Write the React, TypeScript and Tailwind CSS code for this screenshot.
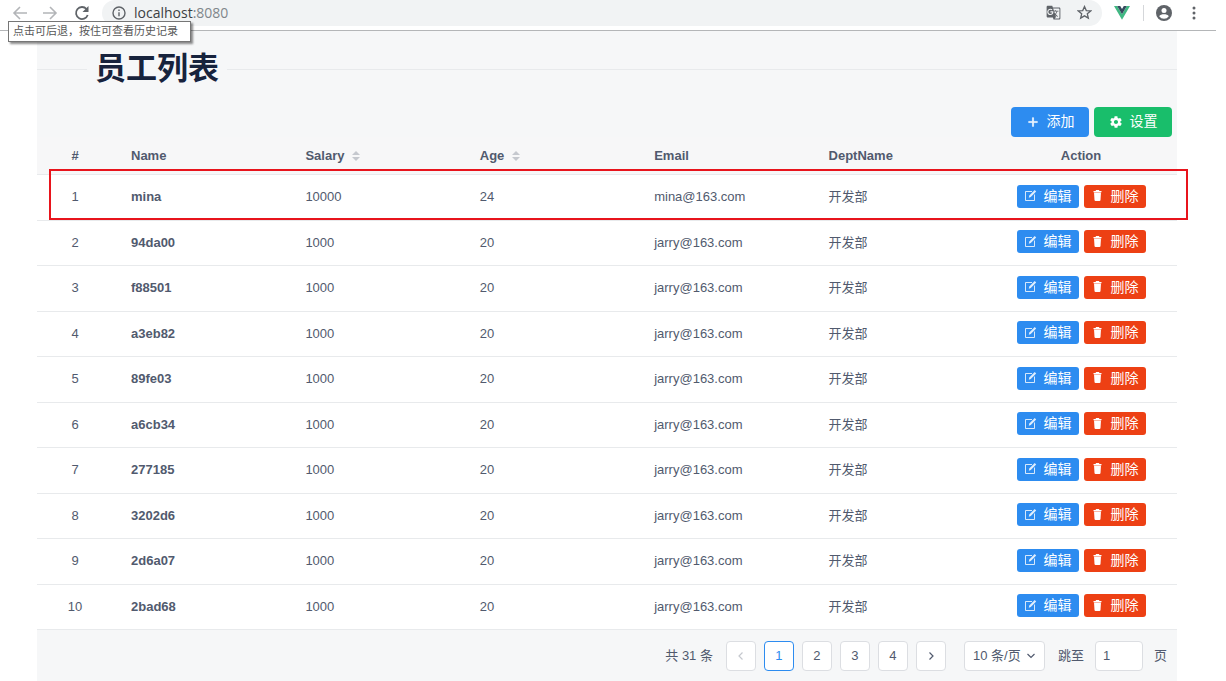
import type { ReactNode } from "react";
import { IoMdAdd, IoMdSettings } from "react-icons/io";
import { MdGTranslate } from "react-icons/md";

type Employee = {
  id: number;
  name: string;
  salary: number;
  age: number;
  email: string;
  dept: string;
};

const employees: Employee[] = [
  { id: 1, name: "mina", salary: 10000, age: 24, email: "mina@163.com", dept: "开发部" },
  { id: 2, name: "94da00", salary: 1000, age: 20, email: "jarry@163.com", dept: "开发部" },
  { id: 3, name: "f88501", salary: 1000, age: 20, email: "jarry@163.com", dept: "开发部" },
  { id: 4, name: "a3eb82", salary: 1000, age: 20, email: "jarry@163.com", dept: "开发部" },
  { id: 5, name: "89fe03", salary: 1000, age: 20, email: "jarry@163.com", dept: "开发部" },
  { id: 6, name: "a6cb34", salary: 1000, age: 20, email: "jarry@163.com", dept: "开发部" },
  { id: 7, name: "277185", salary: 1000, age: 20, email: "jarry@163.com", dept: "开发部" },
  { id: 8, name: "3202d6", salary: 1000, age: 20, email: "jarry@163.com", dept: "开发部" },
  { id: 9, name: "2d6a07", salary: 1000, age: 20, email: "jarry@163.com", dept: "开发部" },
  { id: 10, name: "2bad68", salary: 1000, age: 20, email: "jarry@163.com", dept: "开发部" },
];

export default function App() {
  return (
    <div className="min-h-screen bg-white pr-[10px] font-['Liberation_Sans','Noto_Sans_CJK_SC',sans-serif] text-[13px] text-[#515a6e]">
      <BrowserBar />
      <main className="pr-[39px] pl-[37px]">
        <div className="bg-[#f6f7f8] pt-4">
          <Title>员工列表</Title>
          <div className="mt-4 flex justify-end gap-[5px] pr-[5px]">
            <ToolbarButton
              className="bg-[#2d8cf0]"
              icon={<IoMdAdd className="size-[14px] stroke-current stroke-[20px]" />}
            >
              添加
            </ToolbarButton>
            <ToolbarButton className="bg-[#19be6b]" icon={<IoMdSettings className="size-[14px]" />}>
              设置
            </ToolbarButton>
          </div>
          <EmployeeTable />
          <Pager />
        </div>
      </main>
    </div>
  );
}

function BrowserBar() {
  return (
    <header className="relative flex h-[31px] items-center border-b border-[#b4b6b8] bg-white pb-[5px] text-[#5f6368]">
      <button type="button" aria-label="后退" className="ml-3 text-[#b3b5b8]">
        <ArrowIcon />
      </button>
      <button type="button" aria-label="前进" className="ml-[14px] rotate-180 text-[#b3b5b8]">
        <ArrowIcon />
      </button>
      <button type="button" aria-label="刷新" className="ml-4">
        <ReloadIcon />
      </button>
      <div className="ml-3 flex h-[26px] flex-1 items-center rounded-full bg-[#f1f3f4] px-[10px]">
        <InfoIcon />
        <span className="ml-2 flex-1 font-['Open_Sans',sans-serif] text-[14px] leading-5 text-[#80868b]">
          <span className="text-[#3c4043]">localhost</span>:8080
        </span>
        <button type="button" aria-label="翻译">
          <MdGTranslate className="size-[15px]" />
        </button>
        <button type="button" aria-label="收藏" className="ml-4">
          <StarIcon />
        </button>
      </div>
      <button type="button" aria-label="Vue" className="ml-3">
        <VueIcon />
      </button>
      <span className="ml-[13px] h-4 w-px bg-[#d5d7da]" />
      <button type="button" aria-label="用户" className="ml-3">
        <AccountIcon />
      </button>
      <button type="button" aria-label="更多" className="mr-5 ml-5">
        <MoreIcon />
      </button>
      <div
        role="tooltip"
        className="absolute top-[21px] left-2 z-10 h-[21px] border border-[#767676] bg-white pr-[12px] pl-1 text-[11px] leading-[19px] text-[#575757] shadow-[2px_2px_2px_rgba(0,0,0,0.45)]"
      >
        点击可后退，按住可查看历史记录
      </div>
    </header>
  );
}

/** Section heading with a hairline on either side. */
function Title({ children }: { children: ReactNode }) {
  return (
    <div className="flex items-center">
      <span className="h-px w-[50px] bg-[#e8eaec]" />
      <h1 className="px-2 text-[31px] leading-[44px] font-bold text-[#17233d]">{children}</h1>
      <span className="h-px flex-1 bg-[#e8eaec]" />
    </div>
  );
}

function ToolbarButton({
  className,
  icon,
  children,
}: {
  className: string;
  icon: ReactNode;
  children: ReactNode;
}) {
  return (
    <button
      type="button"
      className={`flex h-[30px] w-[78px] items-center justify-center gap-[7px] rounded pb-px text-[14px] text-white ${className}`}
    >
      {icon}
      {children}
    </button>
  );
}

function EmployeeTable() {
  return (
    <div className="relative">
      <table className="w-full table-fixed border-collapse text-left">
        <thead>
          <tr className="h-[37px] border-b border-[#e8eaec] bg-[#f7f7f8]">
            <th className="w-[76px] text-center">#</th>
            <th className="px-[18px]">Name</th>
            <th className="px-[18px]">
              Salary <SortIcon />
            </th>
            <th className="px-[18px]">
              Age <SortIcon />
            </th>
            <th className="px-[18px]">Email</th>
            <th className="px-[18px]">DeptName</th>
            <th className="w-[192px] text-center">Action</th>
          </tr>
        </thead>
        <tbody>
          {employees.map((e) => (
            <tr
              key={e.id}
              className="border-b border-[#e8eaec] bg-white odd:h-[46px] even:h-[45px]"
            >
              <td className="text-center">{e.id}</td>
              <td className="px-[18px] font-bold">{e.name}</td>
              <td className="px-[18px]">{e.salary}</td>
              <td className="px-[18px]">{e.age}</td>
              <td className="px-[18px]">{e.email}</td>
              <td className="px-[18px]">{e.dept}</td>
              <td className="pb-[2px]">
                <div className="flex justify-center gap-[5px]">
                  <RowButton className="bg-[#2d8cf0]" icon={<EditIcon />}>
                    编辑
                  </RowButton>
                  <RowButton className="bg-[#ed4014]" icon={<TrashIcon />}>
                    删除
                  </RowButton>
                </div>
              </td>
            </tr>
          ))}
        </tbody>
      </table>
      {/* marks the first record */}
      <div className="pointer-events-none absolute top-8 -right-[11px] left-3 h-[51px] border-2 border-[#e8141c]" />
    </div>
  );
}

function RowButton({
  className,
  icon,
  children,
}: {
  className: string;
  icon: ReactNode;
  children: ReactNode;
}) {
  return (
    <button
      type="button"
      className={`flex h-[23px] w-[62px] items-center justify-center gap-[7px] rounded-[3px] pb-px text-[14px] leading-none text-white ${className}`}
    >
      {icon}
      {children}
    </button>
  );
}

const pagerBox = "flex h-[30px] items-center justify-center rounded border bg-white";

function Pager() {
  return (
    <nav className="flex h-[51px] items-center justify-end pt-px pr-[10px]">
      <span className="mr-[13px]">共 31 条</span>
      <div className="flex gap-2">
        <button
          type="button"
          aria-label="上一页"
          disabled
          className={`${pagerBox} w-[30px] border-[#dcdee2] text-[#c5c8ce]`}
        >
          <ChevronIcon d="M6.5 1.5 3 5l3.5 3.5" />
        </button>
        {[1, 2, 3, 4].map((page) => (
          <button
            key={page}
            type="button"
            className={`${pagerBox} w-[30px] ${page === 1 ? "border-[#2d8cf0] text-[#2d8cf0]" : "border-[#dcdee2]"}`}
          >
            {page}
          </button>
        ))}
        <button
          type="button"
          aria-label="下一页"
          className={`${pagerBox} w-[30px] border-[#dcdee2]`}
        >
          <ChevronIcon d="M3.5 1.5 7 5 3.5 8.5" />
        </button>
      </div>
      <div className="relative ml-[18px]">
        <select
          aria-label="每页条数"
          className="h-[30px] w-[81px] appearance-none rounded border border-[#dcdee2] bg-white pl-2"
        >
          <option>10 条/页</option>
        </select>
        <span className="pointer-events-none absolute top-[10px] right-[9px]">
          <ChevronIcon d="M1.5 3 5 6.5 8.5 3" />
        </span>
      </div>
      <label className="ml-[13px] flex items-center">
        跳至
        <input
          type="text"
          defaultValue="1"
          className="mx-[11px] h-[30px] w-12 rounded border border-[#dcdee2] bg-white px-[7px]"
        />
        页
      </label>
    </nav>
  );
}

function ChevronIcon({ d }: { d: string }) {
  return (
    <svg viewBox="0 0 10 10" className="size-[10px]" fill="none" stroke="currentColor" strokeWidth="1.2">
      <path d={d} />
    </svg>
  );
}

function SortIcon() {
  return (
    <svg viewBox="0 0 8 10" className="ml-1 inline h-[10px] w-2" fill="#c5c8ce">
      <path d="M4 0 8 4H0zM4 10 0 6h8z" />
    </svg>
  );
}

function EditIcon() {
  return (
    <svg viewBox="0 0 13 13" className="size-[13px]" fill="none" stroke="currentColor">
      <path d="M8 2.5H1.5v9h9v-6" strokeOpacity="0.8" />
      <path d="m4.8 8.7.5-2.2L10.700 1l1.5 1.4L6.800 8z" fill="currentColor" fillOpacity="0.85" stroke="none" />
    </svg>
  );
}

function TrashIcon() {
  return (
    <svg viewBox="0 0 13 13" className="size-[13px]" fill="currentColor">
      <path d="M4.8 1h3.4v1h2.3v1.2h-8V2h2.3z" />
      <path d="M3 3.600h7L9.500 11q-.1 1-1 1h-4q-.9 0-1-1z" />
    </svg>
  );
}

function ArrowIcon() {
  return (
    <svg viewBox="0 0 16 16" className="size-4" fill="none" stroke="currentColor" strokeWidth="1.6">
      <path d="M15 8H2M8 2 2 8l6 6" />
    </svg>
  );
}

function ReloadIcon() {
  return (
    <svg viewBox="0 0 16 16" className="size-4" fill="none" stroke="currentColor" strokeWidth="1.8">
      <path d="M13.7 10A6 6 0 1 1 12.5 4" />
      <path d="M14.5 1v6h-6z" fill="currentColor" stroke="none" />
    </svg>
  );
}

function InfoIcon() {
  return (
    <svg viewBox="0 0 14 14" className="size-[14px]" fill="none" stroke="currentColor" strokeWidth="1.4">
      <circle cx="7" cy="7" r="6" />
      <path d="M7 6.2v4M7 3.5V5" />
    </svg>
  );
}

function StarIcon() {
  return (
    <svg viewBox="0 0 16 16" className="size-[15px]" fill="none" stroke="currentColor" strokeWidth="1.4">
      <path d="m8 1.6 1.9 4.3 4.7.4-3.6 3.1 1.1 4.6L8 11.6 3.9 14 5 9.4 1.4 6.3l4.7-.4z" />
    </svg>
  );
}

function VueIcon() {
  return (
    <svg viewBox="0 0 16 14" className="h-[14px] w-4">
      <path d="M0 0h3.2L8 8.3 12.8 0H16L8 13.8z" fill="#41b883" />
      <path d="M3.2 0h3L8 3.1 9.8 0h3L8 8.3z" fill="#35495e" />
    </svg>
  );
}

function AccountIcon() {
  return (
    <svg viewBox="0 0 16 16" className="size-4">
      <circle cx="8" cy="8" r="8" fill="currentColor" />
      <circle cx="8" cy="5.4" r="2.5" fill="#fff" />
      <path d="M3.2 11.2C4 9.7 6 9.2 8 9.2s4 .5 4.800 2A5.800 5.800 0 0 1 8 13.8a5.800 5.800 0 0 1-4.800-2.600z" fill="#fff" />
    </svg>
  );
}

function MoreIcon() {
  return (
    <svg viewBox="0 0 4 14" className="h-[14px] w-1" fill="currentColor">
      <circle cx="2" cy="2" r="1.5" />
      <circle cx="2" cy="7" r="1.5" />
      <circle cx="2" cy="12" r="1.5" />
    </svg>
  );
}
